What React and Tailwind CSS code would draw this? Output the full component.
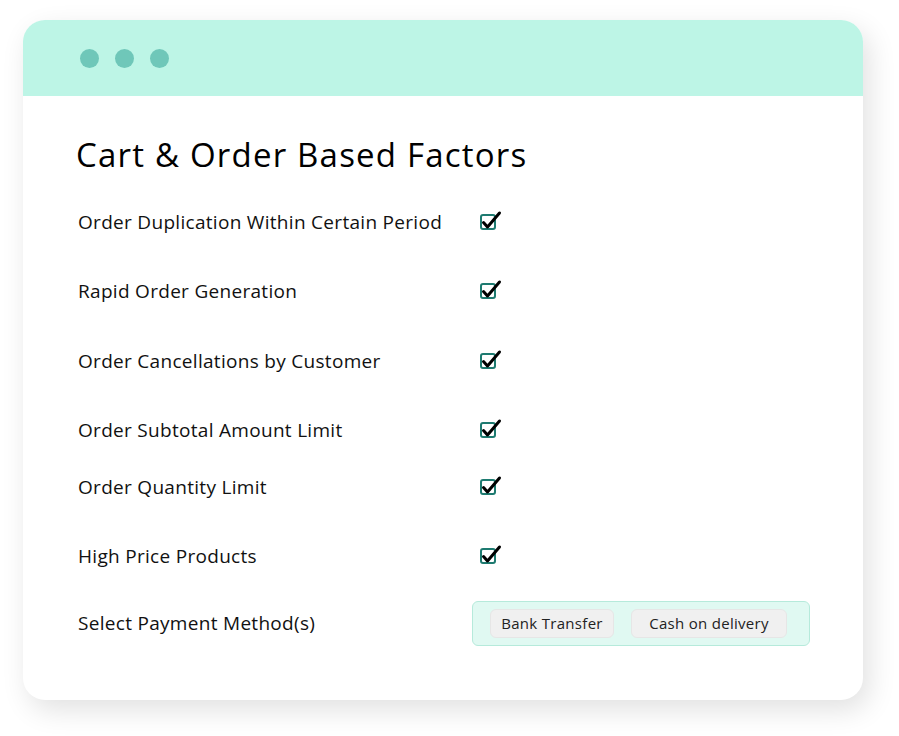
const rows = [
  { label: "Order Duplication Within Certain Period", mt: "mt-[33px]" },
  { label: "Rapid Order Generation", mt: "mt-[41px]" },
  { label: "Order Cancellations by Customer", mt: "mt-[42px]" },
  { label: "Order Subtotal Amount Limit", mt: "mt-[41px]" },
  { label: "Order Quantity Limit", mt: "mt-[29px]" },
  { label: "High Price Products", mt: "mt-[41px]" },
];

function CheckBox() {
  return (
    <div className="relative ml-2 h-4 w-4 rounded-[3px] border-2 border-[#1d7a70]">
      <svg
        className="absolute -left-[2px] -top-[6px]"
        width="22"
        height="22"
        viewBox="0 0 22 22"
      >
        <path
          d="M3.5 12.5 L7.5 17 L19.5 3"
          fill="none"
          stroke="#000"
          strokeWidth="3"
          strokeLinecap="round"
          strokeLinejoin="round"
        />
      </svg>
    </div>
  );
}

export default function App() {
  return (
    <div className="min-h-[736px] w-[899px] bg-white pl-[23px] pt-5 font-['Open_Sans',sans-serif]">
      <div className="w-[840px] h-[680px] overflow-hidden rounded-[22px] bg-white shadow-[6px_10px_28px_rgba(0,0,0,0.12)]">
        <div className="flex h-[76px] items-center gap-[16px] bg-[#bdf5e6] pl-[57px]">
          <span className="h-[19px] w-[19px] rounded-full bg-[#6fc7b9]" />
          <span className="h-[19px] w-[19px] rounded-full bg-[#6fc7b9]" />
          <span className="h-[19px] w-[19px] rounded-full bg-[#6fc7b9]" />
        </div>

        <div className="pl-[55px] pt-[39px]">
          <h1 className="-ml-[2px] h-10 text-[33px] font-medium leading-10 tracking-[1.2px] text-black">
            Cart &amp; Order Based Factors
          </h1>

          {rows.map((r) => (
            <div key={r.label} className={`flex h-7 items-center ${r.mt}`}>
              <span className="w-[394px] text-[19px] tracking-[0.3px] text-[#111]">{r.label}</span>
              <CheckBox />
            </div>
          ))}

          <div className="mt-[31px] flex items-center">
            <span className="w-[394px] text-[19px] tracking-[0.3px] text-[#111]">
              Select Payment Method(s)
            </span>
            <div className="flex h-[45px] w-[338px] items-center gap-[17px] rounded-md border border-[#b6eadb] bg-[#e0f9f2] pl-[17px]">
              <span className="flex h-[29px] w-[124px] items-center justify-center rounded-md border border-[#e6e6e6] bg-[#f0f0f0] text-[15px] tracking-[0.3px] text-[#222]">
                Bank Transfer
              </span>
              <span className="flex h-[29px] w-[156px] items-center justify-center rounded-md border border-[#e6e6e6] bg-[#f0f0f0] text-[15px] tracking-[0.3px] text-[#222]">
                Cash on delivery
              </span>
            </div>
          </div>
        </div>
      </div>
    </div>
  );
}
